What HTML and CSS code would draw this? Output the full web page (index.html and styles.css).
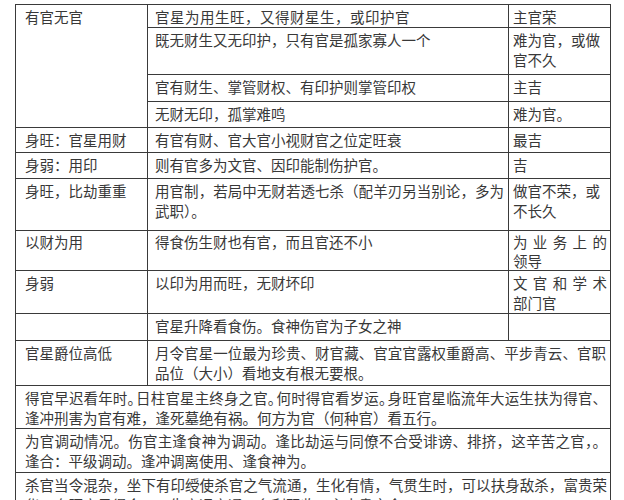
FILE: index.html
```html
<!DOCTYPE html>
<html lang="zh-CN">
<head>
<meta charset="utf-8">
<title>官星表</title>
<link rel="stylesheet" href="styles.css">
</head>
<body>
<table class="sheet">
  <colgroup>
    <col class="col-a">
    <col class="col-b">
    <col class="col-c">
  </colgroup>
  <tbody>
    <tr class="h23">
      <td class="head" rowspan="4">有官无官</td>
      <td class="wide-sp">官星为用生旺，又得财星生，或印护官</td>
      <td class="res">主官荣</td>
    </tr>
    <tr class="h47">
      <td>既无财生又无印护，只有官是孤家寡人一个</td>
      <td class="res">难为官，或做<br>官不久</td>
    </tr>
    <tr class="h27">
      <td>官有财生、掌管财权、有印护则掌管印权</td>
      <td class="res">主吉</td>
    </tr>
    <tr class="h26">
      <td>无财无印，孤掌难鸣</td>
      <td class="res">难为官。</td>
    </tr>
    <tr class="h25">
      <td class="head">身旺：官星用财</td>
      <td>有官有财、官大官小视财官之位定旺衰</td>
      <td class="res">最吉</td>
    </tr>
    <tr class="h26">
      <td class="head">身弱：用印</td>
      <td>则有官多为文官、因印能制伤护官。</td>
      <td class="res">吉</td>
    </tr>
    <tr class="h52">
      <td class="head">身旺，比劫重重</td>
      <td><span class="line">用官制，若局中无财若透七杀（配羊刃另当别论，多为</span>武职）。</td>
      <td class="res">做官不荣，或<br>不长久</td>
    </tr>
    <tr class="h40 tight">
      <td class="head">以财为用</td>
      <td>得食伤生财也有官，而且官还不小</td>
      <td class="res"><span class="line">为业务上的</span>领导</td>
    </tr>
    <tr class="h43">
      <td class="head">身弱</td>
      <td>以印为用而旺，无财坏印</td>
      <td class="res"><span class="line">文官和学术</span>部门官</td>
    </tr>
    <tr class="h27">
      <td class="head"></td>
      <td>官星升降看食伤。食神伤官为子女之神</td>
      <td class="res"></td>
    </tr>
    <tr class="h45">
      <td class="head">官星爵位高低</td>
      <td colspan="2"><span class="line">月令官星一位最为珍贵、财官藏、官宜官露权重爵高、平步青云、官职</span>品位（大小）看地支有根无要根。</td>
    </tr>
    <tr class="h43">
      <td class="full" colspan="3"><span class="line">得官早迟看年时<span class="half">。</span>日柱官星主终身之官<span class="half">。</span>何时得官看岁运<span class="half">。</span>身旺官星临流年大运生扶为得官、</span>逢冲刑害为官有难，逢死墓绝有祸。何方为官（何种官）看五行。</td>
    </tr>
    <tr class="h44">
      <td class="full" colspan="3"><span class="line">为官调动情况。伤官主逢食神为调动。逢比劫运与同僚不合受诽谤、排挤，这辛苦之官，。</span>逢合：平级调动。逢冲调离使用、逢食神为。</td>
    </tr>
    <tr class="h44">
      <td class="full" colspan="3"><span class="line">杀官当令混杂，坐下有印绶使杀官之气流通，生化有情，气贯生时，可以扶身敌杀，富贵荣</span>华，身旺官星得令，一生官运亨通，名利双收，主大贵之命。</td>
    </tr>
  </tbody>
</table>
</body>
</html>
```

FILE: styles.css
```css
html, body {
  margin: 0;
  padding: 0;
  background: #ffffff;
}

body {
  font-family: "Noto Sans CJK SC", "Noto Sans CJK JP", sans-serif;
  font-size: 14.5px;
  line-height: 20px;
  color: #383838;
}

.sheet {
  margin: 4px 0 0 15px;
  border-collapse: collapse;
  table-layout: fixed;
  width: 595px;
}

.col-a { width: 132px; }
.col-b { width: 361px; }
.col-c { width: 102px; }

.sheet td {
  border: 1px solid #3a3a3a;
  vertical-align: top;
  padding: 2px 4px 0 7px;
  white-space: nowrap;
  overflow: hidden;
}

.sheet .tight td {
  line-height: 19px;
  padding-top: 1px;
}

.sheet td.head {
  padding-left: 9px;
}

.sheet td.res {
  padding-left: 4px;
  padding-right: 3px;
}

.sheet td.full {
  padding-left: 9px;
  padding-right: 3px;
}

.wide-sp {
  letter-spacing: 0.5px;
}

.line {
  display: block;
  text-align: justify;
  text-align-last: justify;
}

.half {
  letter-spacing: -6px;
}

.h23 { height: 23px; }
.h25 { height: 25px; }
.h26 { height: 26px; }
.h27 { height: 27px; }
.h40 { height: 40px; }
.h43 { height: 43px; }
.h44 { height: 44px; }
.h45 { height: 45px; }
.h47 { height: 47px; }
.h52 { height: 52px; }
```
